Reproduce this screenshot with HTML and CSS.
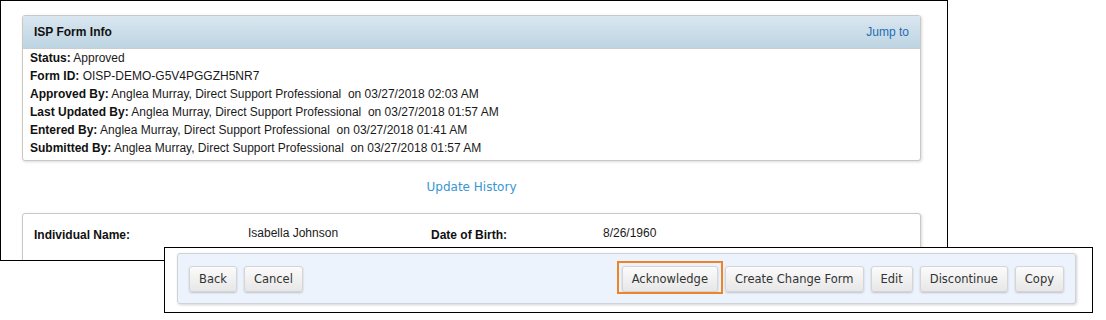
FILE: index.html
```html
<!DOCTYPE html>
<html lang="en">
<head>
    <meta charset="UTF-8">
    <meta name="viewport" content="width=device-width, initial-scale=1.0">
    <title>ISP Form Info</title>
    <link rel="stylesheet" href="styles.css">
</head>
<body>
    <div class="page">
        <div class="form-frame">
            <div class="card">
                <div class="card-head">
                    <span class="card-title">ISP Form Info</span>
                    <a class="jump-link" href="#">Jump to</a>
                </div>
                <div class="card-body">
                    <div class="info-row"><b>Status:</b> Approved</div>
                    <div class="info-row"><b>Form ID:</b> OISP-DEMO-G5V4PGGZH5NR7</div>
                    <div class="info-row"><b>Approved By:</b> Anglea Murray, Direct Support Professional &nbsp;on 03/27/2018 02:03 AM</div>
                    <div class="info-row"><b>Last Updated By:</b> Anglea Murray, Direct Support Professional &nbsp;on 03/27/2018 01:57 AM</div>
                    <div class="info-row"><b>Entered By:</b> Anglea Murray, Direct Support Professional &nbsp;on 03/27/2018 01:41 AM</div>
                    <div class="info-row"><b>Submitted By:</b> Anglea Murray, Direct Support Professional &nbsp;on 03/27/2018 01:57 AM</div>
                </div>
            </div>

            <div class="history">
                <a href="#">Update History</a>
            </div>

            <div class="card person-card">
                <div class="person-grid">
                    <span class="label">Individual Name:</span>
                    <span class="value">Isabella Johnson</span>
                    <span class="label">Date of Birth:</span>
                    <span class="value">8/26/1960</span>
                </div>
            </div>
        </div>

        <!-- action bar sits over the bottom of the form -->
        <div class="action-frame">
            <div class="action-bar">
                <div class="btn-group">
                    <button type="button" class="btn">Back</button>
                    <button type="button" class="btn">Cancel</button>
                </div>
                <div class="btn-group">
                    <button type="button" class="btn btn-marked">Acknowledge</button>
                    <button type="button" class="btn">Create Change Form</button>
                    <button type="button" class="btn">Edit</button>
                    <button type="button" class="btn">Discontinue</button>
                    <button type="button" class="btn">Copy</button>
                </div>
            </div>
        </div>
    </div>
</body>
</html>
```

FILE: styles.css
```css
body {
    font-family: 'Liberation Sans', Arial, sans-serif;
    font-size: 12px;
    background-color: #fff;
    color: #1a1a1a;
    margin: 0;
    padding: 0;
}

.page {
    position: relative;
    width: 1106px;
    height: 320px;
}

.form-frame {
    width: 948px;
    height: 261px;
    box-sizing: border-box;
    border: 1px solid #000;
    overflow: hidden;
    padding: 14px 0 0 21px;
}

.card {
    width: 899px;
    box-sizing: border-box;
    border: 1px solid #cbc7c1;
    border-radius: 3px;
    box-shadow: 1px 1px 3px rgba(0, 0, 0, 0.15);
    background-color: #fff;
}

.card-head {
    display: flex;
    justify-content: space-between;
    align-items: center;
    height: 33px;
    box-sizing: border-box;
    padding: 0 11px 0 11px;
    border-bottom: 1px solid #c9cdd0;
    background: linear-gradient(#dae7f0, #bdd4e2);
}

.card-title {
    font-weight: bold;
    color: #111;
}

.jump-link {
    color: #1f6db3;
    text-decoration: none;
}

.card-body {
    padding: 0 8px 3px 7px;
}

.info-row {
    line-height: 18px;
    white-space: nowrap;
}

.info-row b {
    color: #111;
}

.history {
    height: 52px;
    display: flex;
    justify-content: center;
    align-items: center;
    width: 899px;
}

.history a {
    font-family: 'DejaVu Sans', Verdana, sans-serif;
    font-size: 12px;
    color: #3896d4;
    text-decoration: none;
}

.person-card {
    height: 80px;
    padding: 13px 0 0 11px;
}

.person-grid {
    display: grid;
    grid-template-columns: 214px 183px 172px 1fr;
    line-height: 16px;
}

.person-grid .label {
    font-weight: bold;
    color: #111;
}

.person-grid .value {
    margin-top: -2px;
}

.action-frame {
    position: absolute;
    left: 164px;
    top: 247px;
    width: 929px;
    height: 66px;
    box-sizing: border-box;
    border: 1px solid #000;
    background-color: #fff;
    padding: 5px 16px 0 12px;
}

.action-bar {
    display: flex;
    justify-content: space-between;
    align-items: center;
    height: 51px;
    box-sizing: border-box;
    padding: 0 11px;
    border: 1px solid #cfd3d8;
    border-radius: 3px;
    background-color: #edf3fc;
    box-shadow: 1px 1px 3px rgba(0, 0, 0, 0.18);
}

.btn-group {
    display: flex;
    gap: 7px;
}

.btn {
    height: 26px;
    padding: 0 9px;
    font-family: 'DejaVu Sans', Verdana, sans-serif;
    font-size: 11.5px;
    color: #333;
    border: 1px solid #d5d5d5;
    border-radius: 3px;
    background: linear-gradient(#fbfbfb, #e7e7e7);
    box-shadow: 0 1px 2px rgba(0, 0, 0, 0.2);
    cursor: pointer;
}

/* orange highlight box drawn around the Acknowledge button */
.btn-marked {
    position: relative;
}

.btn-marked::after {
    content: "";
    position: absolute;
    top: -6px;
    left: -6px;
    right: -6px;
    bottom: -3px;
    border: 2px solid #ee8428;
}
```
